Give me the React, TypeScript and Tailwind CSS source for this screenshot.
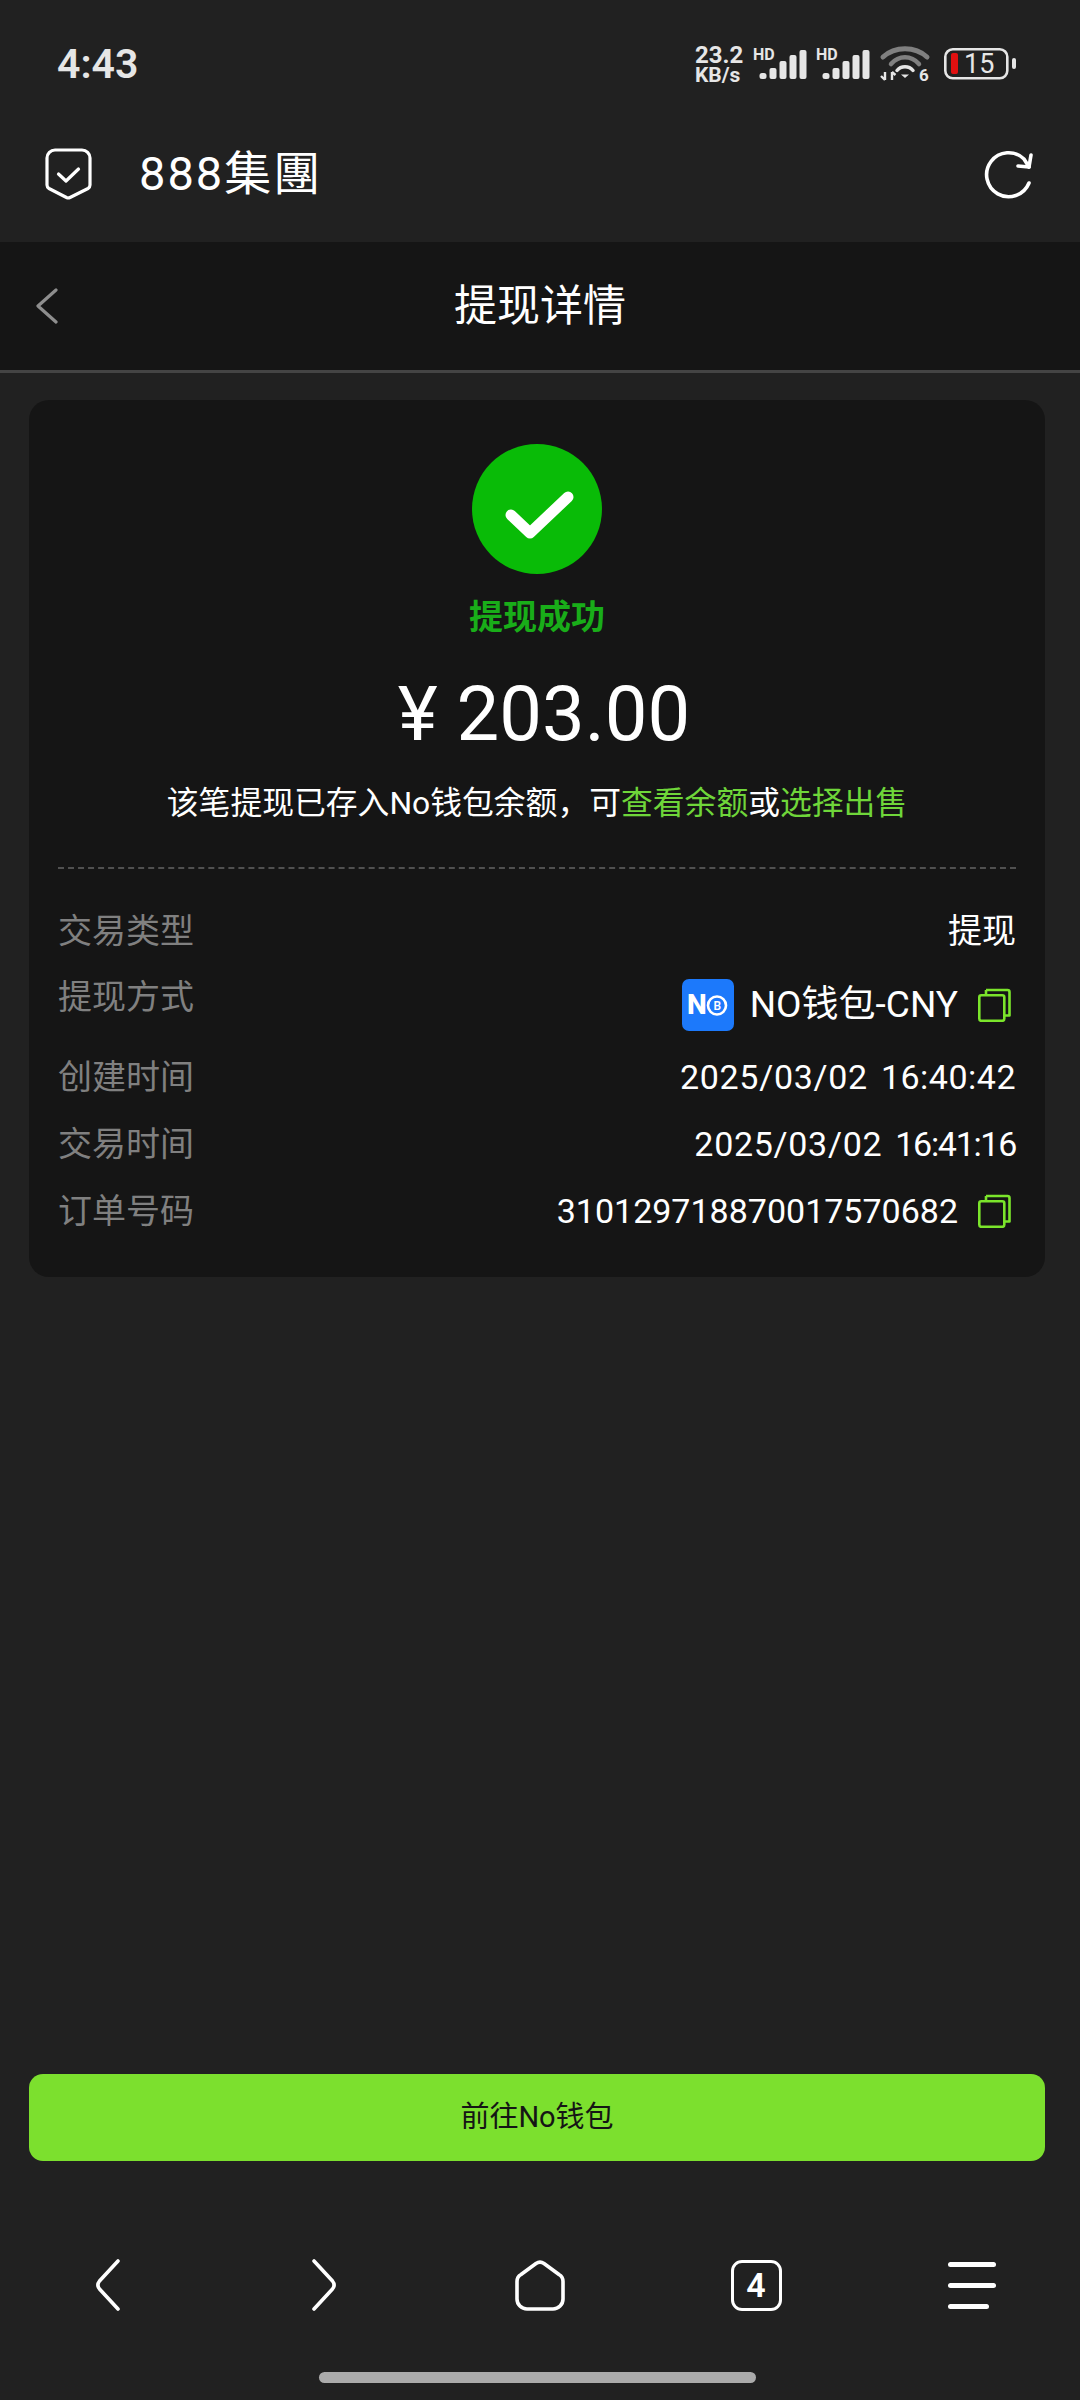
import React from "react";

const FONT = "font-['Roboto','Noto_Sans_CJK_SC',sans-serif]";

function CopyIcon() {
  return (
    <svg width="33" height="34" viewBox="0 0 33 34" fill="none" stroke="#7be52b" strokeWidth="2.6" strokeLinejoin="round" className="mr-[5px] shrink-0">
      <rect x="1.3" y="7.3" width="25" height="25.500" rx="2" />
      <path d="M8 2h21.500a2 2 0 0 1 2 2v23.500h-5" />
      <path d="M8 2v5.300" />
    </svg>
  );
}

function Row({ label, children, className }: { label: string; children: React.ReactNode; className?: string }) {
  return (
    <div className={`flex items-start justify-between ${className ?? ""}`}>
      <span className="text-[34px] leading-[44px] text-[#808080]">{label}</span>
      <div className="flex items-center text-[34px] leading-[44px] text-white">{children}</div>
    </div>
  );
}

function SignalBars() {
  return (
    <svg width="53" height="32" viewBox="0 0 53 32" fill="#e6e6e6" className="overflow-visible">
      <text x="0" y="12" fontSize="16" fontWeight="700" fontFamily="Roboto">HD</text>
      <rect x="6.500" y="25" width="7" height="6" rx="2.500" />
      <rect x="16.500" y="20" width="7" height="11" rx="2" />
      <rect x="26.500" y="13" width="7" height="18" rx="2" />
      <rect x="36.500" y="7" width="7" height="24" rx="2" />
      <rect x="46.500" y="2" width="7" height="29" rx="2" />
    </svg>
  );
}

function StatusBar() {
  return (
    <div className="flex h-[90px] items-center justify-between pl-[57px] pr-[64px] pt-[38px]">
      <span className="text-[41px] font-semibold leading-[46px] text-[#e6e6e6]">4:43</span>
      <div className="flex items-center">
        <div className="mr-[8px] w-[50px] font-bold text-[#e6e6e6]">
          <div className="text-[24px] leading-[21px]">23.2</div>
          <div className="text-[21px] leading-[18px]">KB/s</div>
        </div>
        <SignalBars />
        <div className="w-[10px]" />
        <SignalBars />
        <div className="w-[12px]" />
        <svg width="48" height="36" viewBox="0 0 48 36" fill="none" className="overflow-visible">
          <path d="M2 11C14 0 34 0 46 11" stroke="#808080" strokeWidth="5" strokeLinecap="round" />
          <path d="M10 18C18 9 30 9 38 18" stroke="#808080" strokeWidth="4.500" strokeLinecap="round" />
          <path d="M16 24.500C20 19.500 28 19.500 32 24.500" stroke="#e6e6e6" strokeWidth="3.500" strokeLinecap="round" />
          <path d="M20 28.500h8l-4 3.500z" fill="#e6e6e6" />
          <path d="M4 26v8M0 30l4 4M11 34v-8M11 26l3.500 3" stroke="#e6e6e6" strokeWidth="2.400" />
          <text x="38" y="35" fontSize="17" fontWeight="700" fill="#e6e6e6" fontFamily="Roboto">6</text>
        </svg>
        <div className="w-[15px]" />
        <svg width="72" height="32" viewBox="0 0 72 32" fill="none" className="overflow-visible">
          <rect x="1.300" y="1.300" width="62" height="29" rx="7.500" stroke="#e6e6e6" strokeWidth="2.600" />
          <rect x="7" y="5" width="7" height="21" rx="2" fill="#e01010" />
          <text x="20" y="25" fontSize="27" fill="#e6e6e6" fontFamily="Roboto">15</text>
          <rect x="68" y="10" width="4" height="11" rx="2" fill="#e6e6e6" />
        </svg>
      </div>
    </div>
  );
}

function BrowserBar() {
  return (
    <div className="flex h-[152px] items-center justify-between pl-[45px] pr-[47px] pt-[16px]">
      <div className="flex items-center gap-[47px]">
        <svg width="47" height="52" viewBox="0 0 47 52" fill="none" stroke="#fff" strokeWidth="3.200" strokeLinecap="round" strokeLinejoin="round">
          <path d="M10 2h27a8 8 0 0 1 8 8v27a4 4 0 0 1-2 3.500L25 49.500a4 4 0 0 1-3.500 0L4 40.500A4 4 0 0 1 2 37V10a8 8 0 0 1 8-8z" />
          <path d="M13.500 26l7.500 7 12.500-12" />
        </svg>
        <span className="text-[47px] leading-[54px] tracking-[2px] text-white">888集團</span>
      </div>
      <svg width="49" height="49" viewBox="0 0 49 49" fill="none" stroke="#fff" strokeWidth="3.600" strokeLinecap="round" strokeLinejoin="round">
        <path d="M45 33A22 22 0 1 1 40 9L45 17" />
        <path d="M47 5L45 17L34 16" />
      </svg>
    </div>
  );
}

function TitleBar() {
  return (
    <div className="relative flex h-[131px] items-center justify-center border-b-[3px] border-[#444444] bg-[#151515]">
      <svg className="absolute left-[35px]" width="23" height="36" viewBox="0 0 23 36" fill="none" stroke="#8e8e8e" strokeWidth="3.200" strokeLinecap="round" strokeLinejoin="round">
        <path d="M21 2L3 18l18 16" />
      </svg>
      <span className="text-[43px] leading-[56px] text-white">提现详情</span>
    </div>
  );
}

function WalletBadge() {
  return (
    <div className="mr-[16px] flex h-[52px] w-[52px] items-center justify-center rounded-[7px] bg-[#1c79fb]">
      <svg width="42" height="24" viewBox="0 0 42 24" fill="none" className="overflow-visible">
        <text x="0" y="21" fontSize="28" fontWeight="800" fill="#fff" fontFamily="Roboto">N</text>
        <circle cx="30" cy="12.500" r="9" stroke="#fff" strokeWidth="2.600" />
        <text x="26.500" y="17" fontSize="12" fontWeight="600" fill="#fff" fontFamily="Roboto">B</text>
      </svg>
    </div>
  );
}

function DetailCard() {
  return (
    <div className="ml-[29px] mr-[35px] mt-[27px] flex h-[877px] flex-col rounded-[20px] bg-[#151515] px-[29px]">
      <div className="mt-[44px] flex justify-center">
        <div className="flex h-[130px] w-[130px] items-center justify-center rounded-full bg-[#09bb07]">
          <svg width="130" height="130" viewBox="0 0 130 130" fill="none" stroke="#fff" strokeWidth="11" strokeLinecap="round" strokeLinejoin="round">
            <path d="M39 71L58 89L96 53" />
          </svg>
        </div>
      </div>
      <div className="mt-[21px] text-center text-[34px] font-bold leading-[44px] text-[#19ad19]">提现成功</div>
      <div className="mt-[30px] pl-[14px] text-center text-[76px] leading-[90px] text-white">¥ 203.00</div>
      <div className="mt-[22px] text-center text-[31.800px] leading-[44px] text-white">
        该笔提现已存入No钱包余额，可<span className="text-[#6fd63a]">查看余额</span>或<span className="text-[#6fd63a]">选择出售</span>
      </div>
      <div className="mt-[42px] border-t-2 border-dashed border-[#505050]" />
      <div className="mt-[40px]">
        <Row label="交易类型">提现</Row>
        <Row label="提现方式" className="mt-[22px] h-[60px]">
          <div className="mt-[4px] flex items-center">
            <WalletBadge />
            <span className="mr-[20px] text-[37px]">NO钱包-CNY</span>
            <CopyIcon />
          </div>
        </Row>
        <Row label="创建时间" className="mt-[20px]">
          <span className="tracking-[0.7px]">2025/03/02</span>
          <span className="ml-[13px] tracking-[0.5px]">16:40:42</span>
        </Row>
        <Row label="交易时间" className="mt-[23px]">
          <span className="tracking-[0.7px]">2025/03/02</span>
          <span className="ml-[13px] tracking-[-1.300px]">16:41:16</span>
        </Row>
        <Row label="订单号码" className="mt-[23px]">
          <span className="mr-[20px]">310129718870017570682</span>
          <CopyIcon />
        </Row>
      </div>
    </div>
  );
}

function BottomNav() {
  return (
    <div className="grid h-[51px] grid-cols-5 place-items-center">
      <svg width="24" height="52" viewBox="0 0 24 52" fill="none" stroke="#fff" strokeWidth="3.600" strokeLinecap="round" strokeLinejoin="round">
        <path d="M22 2L3.500 22c-2 2.500-2 5.500 0 8L22 50" />
      </svg>
      <svg width="24" height="52" viewBox="0 0 24 52" fill="none" stroke="#fff" strokeWidth="3.600" strokeLinecap="round" strokeLinejoin="round">
        <path d="M2 2l18.500 20c2 2.500 2 5.500 0 8L2 50" />
      </svg>
      <svg width="50" height="51" viewBox="0 0 50 51" fill="none" stroke="#fff" strokeWidth="3.600" strokeLinejoin="round">
        <path d="M21 3.500a7 7 0 0 1 8 0l15 11a8 8 0 0 1 4 7V39a10 10 0 0 1-10 10H12A10 10 0 0 1 2 39V21.500a8 8 0 0 1 4-7z" />
      </svg>
      <div className="flex h-[51px] w-[51px] items-center justify-center rounded-[11px] border-[3.500px] border-white text-[34px] font-semibold leading-none text-white">4</div>
      <div className="flex w-[48px] flex-col gap-[16px]">
        <div className="h-[5px] w-[48px] rounded bg-white" />
        <div className="h-[5px] w-[48px] rounded bg-white" />
        <div className="h-[5px] w-[41px] rounded bg-white" />
      </div>
    </div>
  );
}

export default function App() {
  return (
    <div className={`flex h-[2400px] w-[1080px] flex-col bg-[#212121] ${FONT}`}>
      <StatusBar />
      <BrowserBar />
      <TitleBar />
      <DetailCard />
      <div className="flex-1" />
      <div className="ml-[29px] mr-[35px] flex h-[87px] items-center justify-center rounded-[14px] bg-[#7ce02e] text-[29px] text-[#151515]">
        前往No钱包
      </div>
      <div className="mt-[98px]">
        <BottomNav />
      </div>
      <div className="mb-[17px] mt-[62px] flex justify-center">
        <div className="h-[11px] w-[437px] -translate-x-[3px] rounded-full bg-[#ababab]" />
      </div>
    </div>
  );
}
